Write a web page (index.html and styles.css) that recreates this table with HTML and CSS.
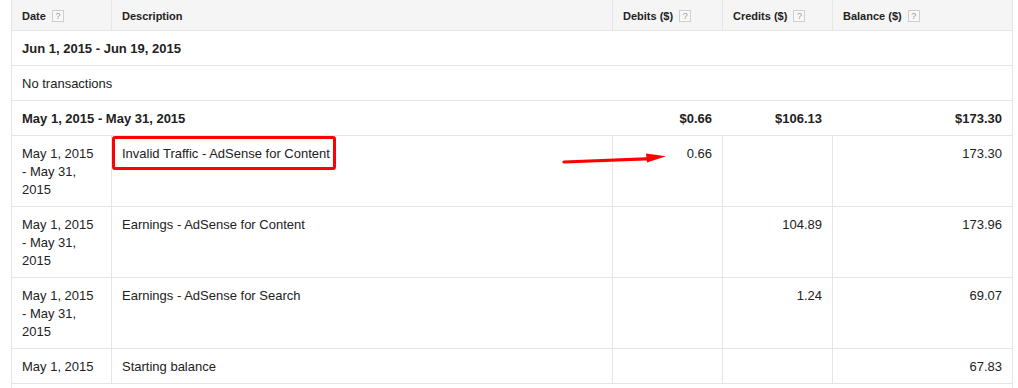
FILE: index.html
```html
<!DOCTYPE html>
<html>
<head>
<meta charset="utf-8">
<link rel="stylesheet" href="styles.css">
</head>
<body>
<div class="page">
  <div class="ledger">
    <div class="row head">
      <div class="cell">Date <span class="help">?</span></div>
      <div class="cell sep">Description</div>
      <div class="cell sep">Debits ($) <span class="help">?</span></div>
      <div class="cell sep">Credits ($) <span class="help">?</span></div>
      <div class="cell sep">Balance ($) <span class="help">?</span></div>
    </div>
    <div class="row group">
      <div class="cell span5 bold">Jun 1, 2015 - Jun 19, 2015</div>
    </div>
    <div class="row group">
      <div class="cell span5">No transactions</div>
    </div>
    <div class="row group">
      <div class="cell span2 bold">May 1, 2015 - May 31, 2015</div>
      <div class="cell num bold">$0.66</div>
      <div class="cell num bold">$106.13</div>
      <div class="cell num bold">$173.30</div>
    </div>
    <div class="row">
      <div class="cell">May 1, 2015 - May 31, 2015</div>
      <div class="cell sep">Invalid Traffic - AdSense for Content</div>
      <div class="cell sep num">0.66</div>
      <div class="cell sep num"></div>
      <div class="cell sep num">173.30</div>
    </div>
    <div class="row">
      <div class="cell">May 1, 2015 - May 31, 2015</div>
      <div class="cell sep">Earnings - AdSense for Content</div>
      <div class="cell sep num"></div>
      <div class="cell sep num">104.89</div>
      <div class="cell sep num">173.96</div>
    </div>
    <div class="row">
      <div class="cell">May 1, 2015 - May 31, 2015</div>
      <div class="cell sep">Earnings - AdSense for Search</div>
      <div class="cell sep num"></div>
      <div class="cell sep num">1.24</div>
      <div class="cell sep num">69.07</div>
    </div>
    <div class="row">
      <div class="cell">May 1, 2015</div>
      <div class="cell sep">Starting balance</div>
      <div class="cell sep num"></div>
      <div class="cell sep num"></div>
      <div class="cell sep num">67.83</div>
    </div>
    <div class="row group">
      <div class="cell span5">&nbsp;</div>
    </div>
  </div>
  <div class="highlight"></div>
  <svg class="arrow" width="120" height="20" viewBox="0 0 120 20">
    <line x1="4" y1="12" x2="92" y2="8.6" stroke="#f00" stroke-width="3.2" stroke-linecap="round"/>
    <polygon points="86,3.5 106,6.2 87,12.6" fill="#f00"/>
  </svg>
</div>
</body>
</html>
```
FILE: styles.css
```css
html, body {
  margin: 0;
  padding: 0;
  background: #fff;
}
.page {
  position: relative;
  padding-left: 11px;
  font-family: Arial, "Liberation Sans", sans-serif;
  font-size: 13px;
  color: #222;
}
.ledger {
  width: 1000px;
  border-left: 1px solid #e5e5e5;
  border-right: 1px solid #e5e5e5;
}
.row {
  display: grid;
  grid-template-columns: 99px 501px 110px 110px 180px;
  border-bottom: 1px solid #e5e5e5;
}
.cell {
  box-sizing: border-box;
  padding: 9px 10px 7px;
  line-height: 18px;
  min-height: 34px;
}
.sep {
  border-left: 1px solid #e5e5e5;
}
.num {
  text-align: right;
}
.bold {
  font-weight: bold;
}
.span5 {
  grid-column: 1 / 6;
}
.span2 {
  grid-column: 1 / 3;
}
.head {
  background: #f5f5f5;
}
.head .cell {
  height: 30px;
  min-height: 30px;
  padding: 1px 10px 0;
  display: flex;
  align-items: center;
  font-size: 11px;
  font-weight: bold;
  color: #222;
  white-space: pre;
}
.help {
  display: inline-flex;
  align-items: center;
  justify-content: center;
  box-sizing: border-box;
  width: 12px;
  height: 12px;
  margin-left: 3px;
  border: 1px solid #cfcfcf;
  background: #f8f8f8;
  color: #999;
  font-size: 9px;
  font-weight: normal;
  line-height: 10px;
}
.highlight {
  position: absolute;
  left: 112px;
  top: 136px;
  width: 224px;
  height: 34px;
  box-sizing: border-box;
  border: 3px solid #f00;
  border-radius: 3px;
}
.arrow {
  position: absolute;
  left: 560px;
  top: 150px;
}
```
